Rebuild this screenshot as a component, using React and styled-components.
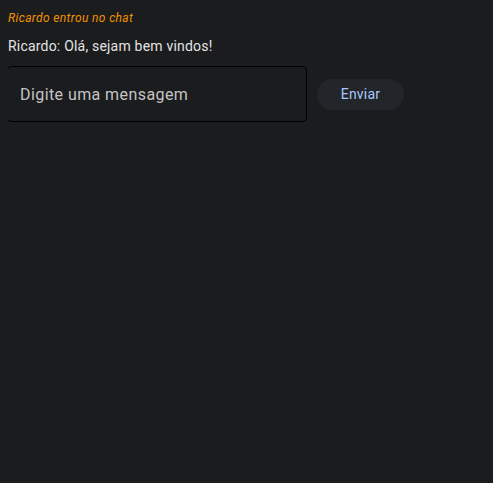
import React from "react";
import styled, { createGlobalStyle } from "styled-components";

const Global = createGlobalStyle`
  html, body { background: #1b1c1e; }
  body { margin: 8px; font-family: Roboto, "Noto Sans", sans-serif; color: #e3e3e3; }
`;

const Chat = styled.div`
  display: flex;
  flex-direction: column;
`;

const SystemLine = styled.div`
  font-size: 12px;
  font-style: italic;
  color: #f29100;
  line-height: 18px;
  letter-spacing: 0.36px;
  padding-top: 1px;
`;

const Message = styled.div`
  font-size: 14px;
  line-height: 20px;
  margin-top: 9px;
  color: #e3e3e3;
  letter-spacing: 0.2px;
`;

const Row = styled.div`
  display: flex;
  align-items: center;
  gap: 10px;
  margin-top: 10px;
  margin-left: -1px;
`;

const Input = styled.input`
  width: 300px;
  height: 56px;
  box-sizing: border-box;
  background: transparent;
  border: 1px solid #000;
  border-radius: 4px;
  padding: 0 12px;
  font-family: Roboto, sans-serif;
  font-size: 16px;
  letter-spacing: 0.42px;
  color: #e3e3e3;
  outline: none;
  &::placeholder { color: #c4c4c4; opacity: 1; }
`;

const Button = styled.button`
  height: 31px;
  width: 87px;
  padding: 0;
  border: none;
  border-radius: 16px;
  background: #22252a;
  color: #a8c8f8;
  font-family: Roboto, sans-serif;
  font-size: 14px;
  letter-spacing: 0.2px;
  cursor: pointer;
`;

export default function App() {
  return (
    <>
      <Global />
      <Chat>
        <SystemLine>Ricardo entrou no chat</SystemLine>
        <Message>Ricardo: Olá, sejam bem vindos!</Message>
        <Row>
          <Input placeholder="Digite uma mensagem" />
          <Button>Enviar</Button>
        </Row>
      </Chat>
    </>
  );
}
